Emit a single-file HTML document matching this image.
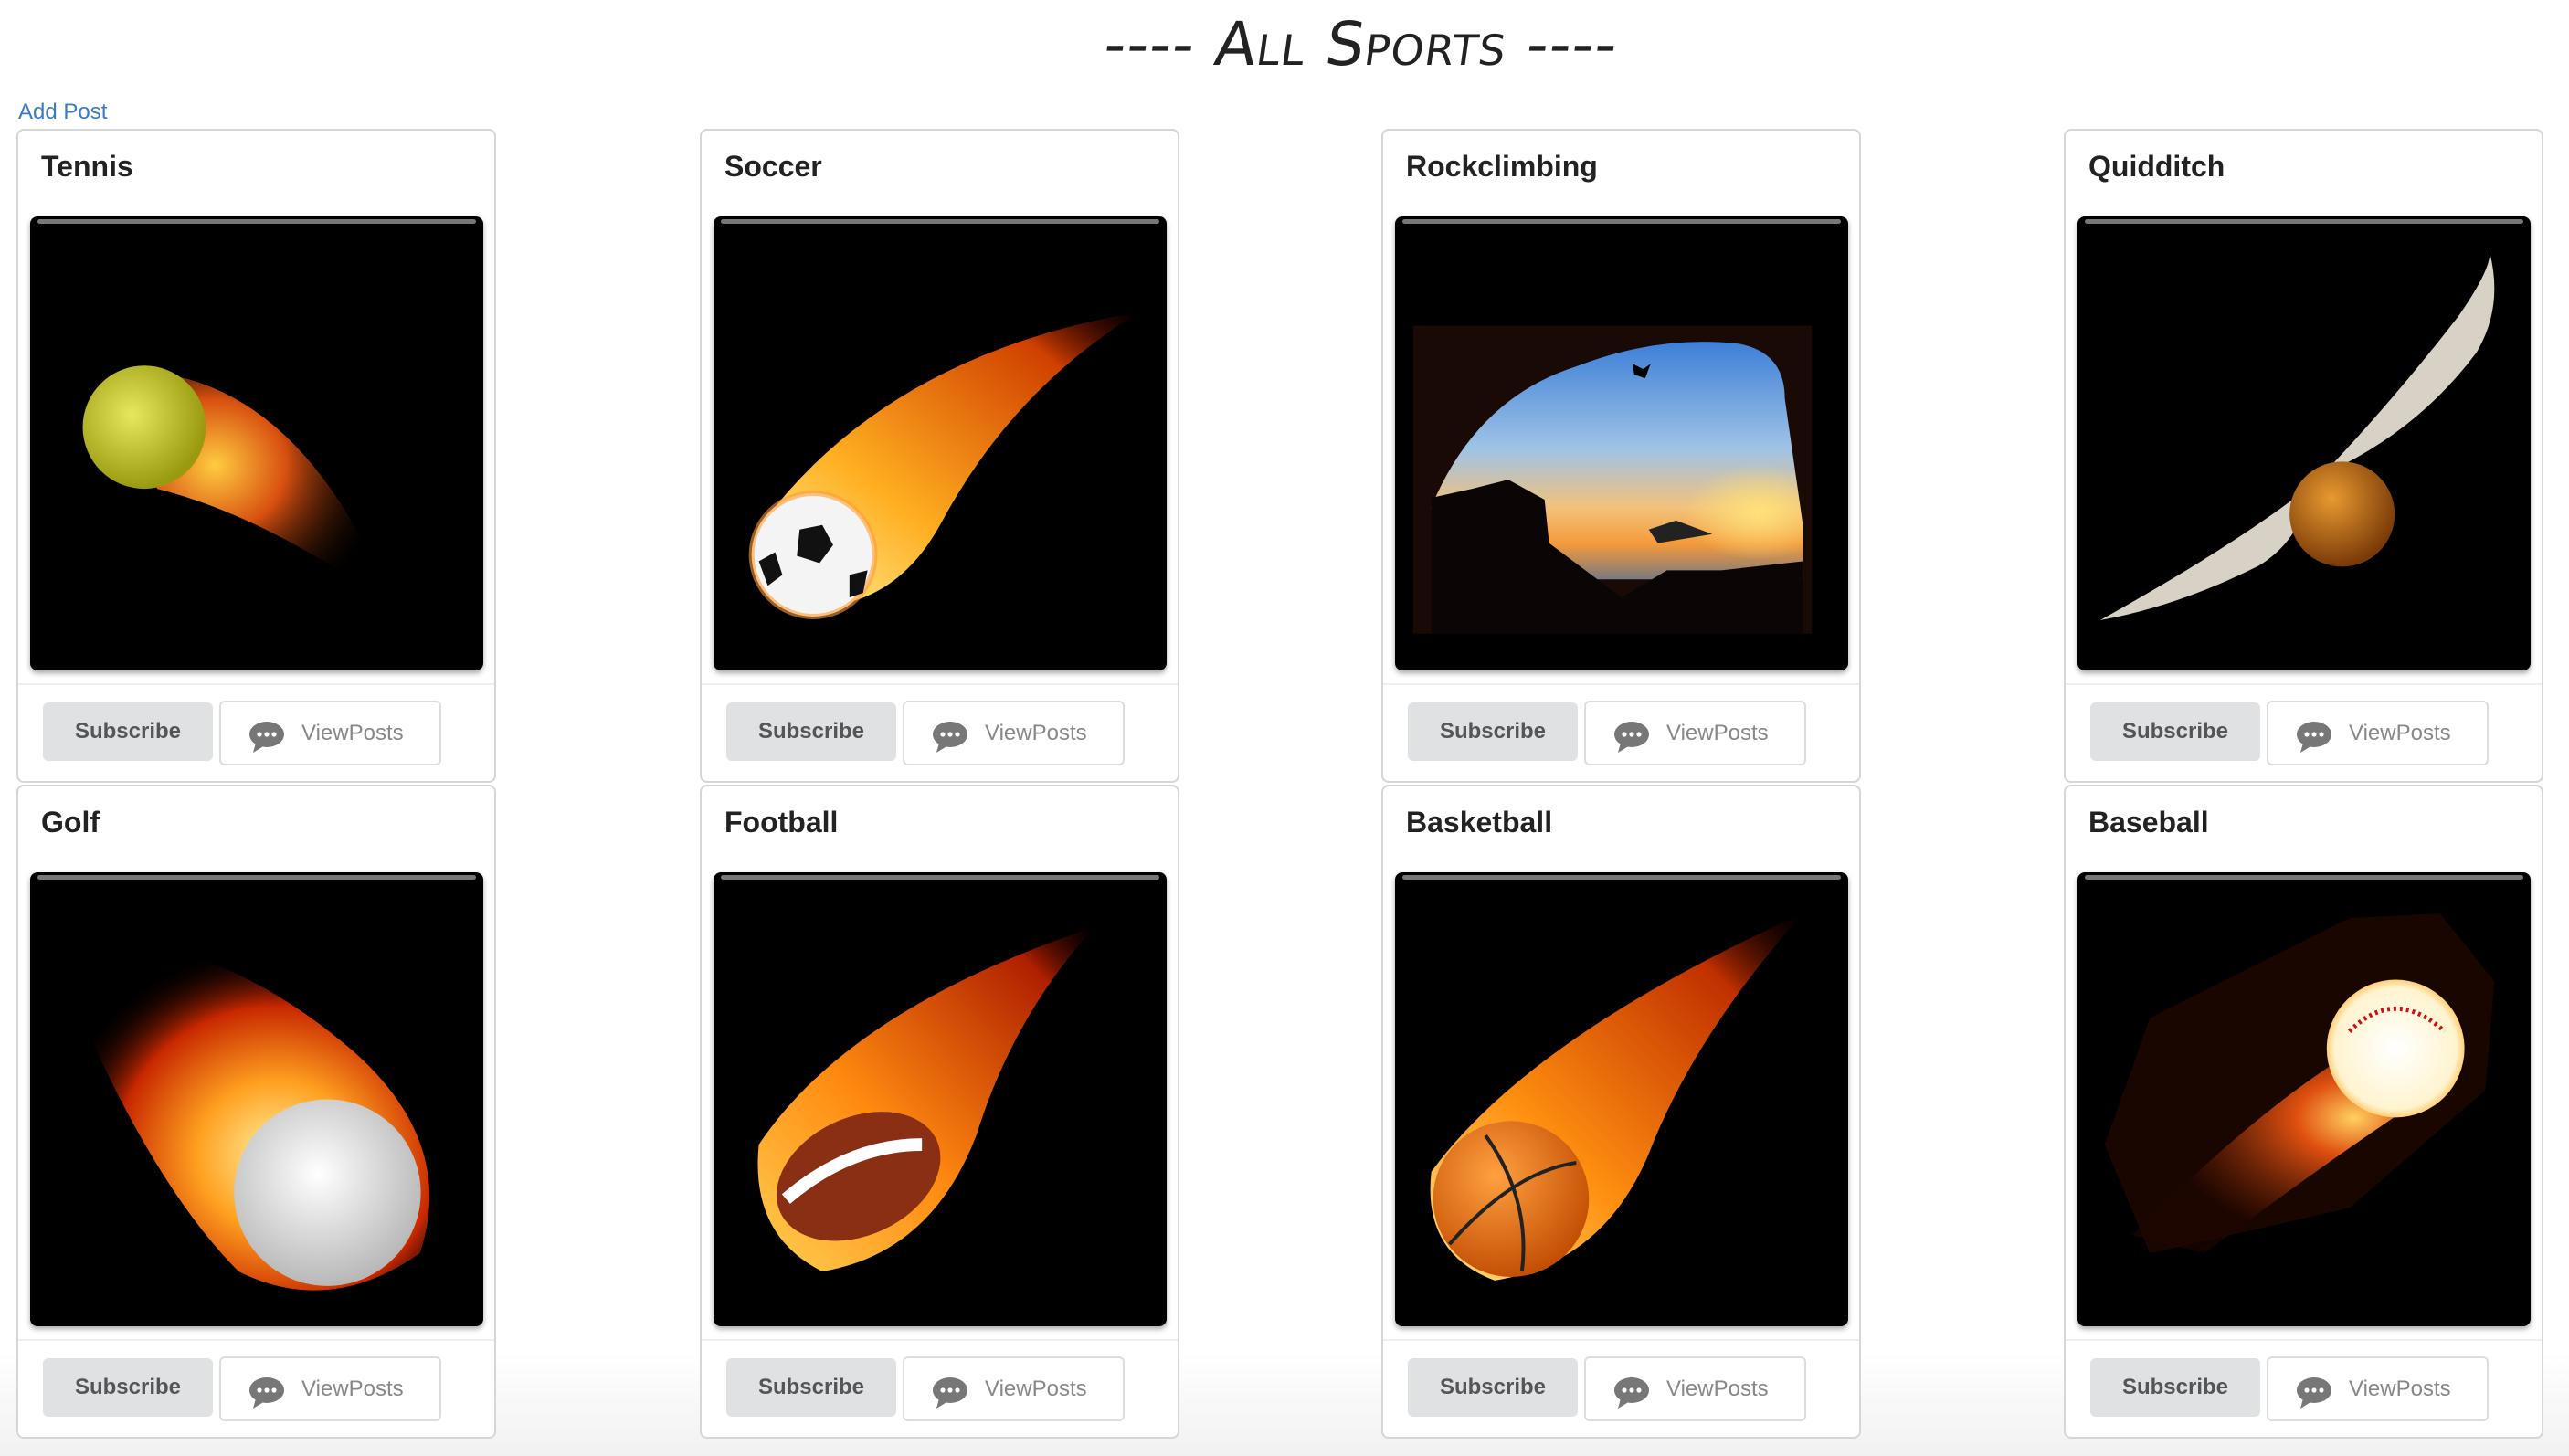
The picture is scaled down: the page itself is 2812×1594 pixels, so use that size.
<!DOCTYPE html>
<html><head><meta charset="utf-8"><style>
*{margin:0;padding:0;box-sizing:border-box}
body{width:2812px;height:1594px;background:linear-gradient(#fff 0,#fff 1480px,#f1f1f1 1594px);font-family:"Liberation Sans",sans-serif;position:relative;overflow:hidden}
.title{position:absolute;left:1140px;top:10px;width:700px;text-align:center;font-family:"DejaVu Sans",sans-serif;font-size:66px;color:#222;font-variant:small-caps;letter-spacing:1px;font-weight:normal;transform:skewX(-8deg)}
.add{position:absolute;left:20px;top:109px;font-size:24px;color:#3a7bc8}
.card{position:absolute;width:525px;height:716px;border:2px solid #d6d6d6;border-radius:8px;background:#fff}
.card h2{position:absolute;left:25px;top:21px;font-size:32px;font-weight:bold;color:#222}
.img{position:absolute;left:13px;top:94px;width:496px;height:497px;background:#000;border-radius:8px;overflow:hidden;box-shadow:0 3px 6px rgba(0,0,0,.35)}
.img:before{content:"";position:absolute;left:8px;right:8px;top:3px;height:5px;background:#777;border-radius:3px;z-index:2}
.img svg{position:absolute;left:0;top:0}
.div{position:absolute;left:0;right:0;top:605px;border-top:2px solid #eee}
.sub{position:absolute;left:27px;top:626px;width:186px;height:64px;background:#e0e1e2;border-radius:6px;font-size:24px;font-weight:bold;color:#555;text-align:center;line-height:64px}
.vp{position:absolute;left:220px;top:624px;width:243px;height:71px;border:2px solid #ddd;border-radius:6px;font-size:24px;color:#888;line-height:67px;padding-left:88px}
.vp svg{position:absolute;left:30px;top:20px}
</style></head><body>
<div class="title">---- All Sports ----</div>
<div class="add">Add Post</div>

<div class="card" style="left:18px;top:141px"><h2>Tennis</h2><div class="img"><svg width="496" height="497" viewBox="0 0 500 500">
<defs><radialGradient id="f1" cx="0.3" cy="0.4" r="0.7"><stop offset="0" stop-color="#ffcc40"/><stop offset="0.4" stop-color="#d85010"/><stop offset="1" stop-color="#000" stop-opacity="0"/></radialGradient>
<radialGradient id="tb" cx="0.4" cy="0.4" r="0.6"><stop offset="0" stop-color="#e8e860"/><stop offset="1" stop-color="#9a9a10"/></radialGradient></defs>
<path d="M120 170 Q300 180 400 430 Q260 330 140 300Z" fill="url(#f1)"/>
<circle cx="126" cy="232" r="68" fill="url(#tb)"/></svg></div>
<div class="div"></div><div class="sub">Subscribe</div><div class="vp"><svg width="40" height="36" viewBox="0 0 40 36"><ellipse cx="20" cy="15" rx="19" ry="14" fill="#777"/><path d="M8 24 L5 35 L18 27Z" fill="#777"/><circle cx="12" cy="15" r="2.6" fill="#fff"/><circle cx="20" cy="15" r="2.6" fill="#fff"/><circle cx="28" cy="15" r="2.6" fill="#fff"/></svg>ViewPosts</div></div>

<div class="card" style="left:766px;top:141px"><h2>Soccer</h2><div class="img"><svg width="496" height="497" viewBox="0 0 500 500">
<defs><linearGradient id="f2" x1="0" y1="1" x2="1" y2="0"><stop offset="0" stop-color="#fff3a0"/><stop offset="0.35" stop-color="#ffae20"/><stop offset="0.8" stop-color="#d04000"/><stop offset="1" stop-color="#600" stop-opacity="0"/></linearGradient></defs>
<path d="M60 330 Q200 150 470 105 Q330 190 250 340 Q200 430 110 430Z" fill="url(#f2)"/>
<circle cx="110" cy="373" r="68" fill="#f4f4f4"/><circle cx="110" cy="373" r="68" fill="none" stroke="#ff9b30" stroke-width="6" opacity=".6"/>
<path d="M95 345 l25 -5 l12 22 l-15 20 l-25 -8Z" fill="#111"/><path d="M50 380 l18 -10 l8 25 l-16 12Z" fill="#111"/><path d="M150 395 l20 -5 l-5 25 l-15 5Z" fill="#111"/></svg></div>
<div class="div"></div><div class="sub">Subscribe</div><div class="vp"><svg width="40" height="36" viewBox="0 0 40 36"><ellipse cx="20" cy="15" rx="19" ry="14" fill="#777"/><path d="M8 24 L5 35 L18 27Z" fill="#777"/><circle cx="12" cy="15" r="2.6" fill="#fff"/><circle cx="20" cy="15" r="2.6" fill="#fff"/><circle cx="28" cy="15" r="2.6" fill="#fff"/></svg>ViewPosts</div></div>

<div class="card" style="left:1512px;top:141px"><h2>Rockclimbing</h2><div class="img"><svg width="496" height="497" viewBox="0 0 500 500">
<defs><linearGradient id="sky" x1="0" y1="0" x2="0" y2="1"><stop offset="0" stop-color="#3d7fd8"/><stop offset="0.45" stop-color="#9fc3e6"/><stop offset="0.7" stop-color="#f2c27a"/><stop offset="0.85" stop-color="#f49a3a"/><stop offset="1" stop-color="#7a7a80"/></linearGradient>
<radialGradient id="sun" cx="0.88" cy="0.72" r="0.2"><stop offset="0" stop-color="#ffe27a"/><stop offset="1" stop-color="#ffe27a" stop-opacity="0"/></radialGradient></defs>
<rect x="20" y="120" width="440" height="340" fill="#1a0a06"/>
<path d="M40 320 Q90 200 200 165 Q290 130 380 140 Q430 150 430 200 L450 340 L450 400 L50 400Z" fill="url(#sky)"/>
<path d="M40 320 Q90 200 200 165 Q290 130 380 140 Q430 150 430 200 L450 340 L450 400 L50 400Z" fill="url(#sun)"/>
<path d="M40 400 L40 310 L85 300 L125 290 L165 312 L170 360 L250 420 L300 390 L360 390 L450 380 L450 460 L40 460Z" fill="#0b0605"/>
<path d="M280 345 L310 335 L350 350 L290 360Z" fill="#222"/>
<path d="M262 162 l12 6 l8 -6 l-6 16 l-12 -4Z" fill="#000"/></svg></div>
<div class="div"></div><div class="sub">Subscribe</div><div class="vp"><svg width="40" height="36" viewBox="0 0 40 36"><ellipse cx="20" cy="15" rx="19" ry="14" fill="#777"/><path d="M8 24 L5 35 L18 27Z" fill="#777"/><circle cx="12" cy="15" r="2.6" fill="#fff"/><circle cx="20" cy="15" r="2.6" fill="#fff"/><circle cx="28" cy="15" r="2.6" fill="#fff"/></svg>ViewPosts</div></div>

<div class="card" style="left:2259px;top:141px"><h2>Quidditch</h2><div class="img"><svg width="496" height="497" viewBox="0 0 500 500">
<defs><radialGradient id="gs" cx="0.4" cy="0.35" r="0.65"><stop offset="0" stop-color="#e89a30"/><stop offset="1" stop-color="#7a3a08"/></radialGradient></defs>
<path d="M282 272 Q350 200 420 110 Q455 60 455 40 Q470 100 440 150 Q380 230 290 275Z" fill="#d8d2c6"/>
<path d="M240 310 Q160 370 25 445 Q110 430 200 385 Q240 360 250 320Z" fill="#d8d2c6"/>
<circle cx="292" cy="328" r="58" fill="url(#gs)"/></svg></div>
<div class="div"></div><div class="sub">Subscribe</div><div class="vp"><svg width="40" height="36" viewBox="0 0 40 36"><ellipse cx="20" cy="15" rx="19" ry="14" fill="#777"/><path d="M8 24 L5 35 L18 27Z" fill="#777"/><circle cx="12" cy="15" r="2.6" fill="#fff"/><circle cx="20" cy="15" r="2.6" fill="#fff"/><circle cx="28" cy="15" r="2.6" fill="#fff"/></svg>ViewPosts</div></div>

<div class="card" style="left:18px;top:859px"><h2>Golf</h2><div class="img"><svg width="496" height="497" viewBox="0 0 500 500">
<defs><radialGradient id="g5" cx="0.6" cy="0.62" r="0.6"><stop offset="0" stop-color="#fff2a0"/><stop offset="0.35" stop-color="#ffa020"/><stop offset="0.7" stop-color="#c82800"/><stop offset="1" stop-color="#000" stop-opacity="0"/></radialGradient>
<radialGradient id="gb" cx="0.45" cy="0.4" r="0.6"><stop offset="0" stop-color="#fff"/><stop offset="1" stop-color="#b8b8b8"/></radialGradient></defs>
<path d="M20 70 Q200 60 360 200 Q470 300 430 420 Q330 490 230 440 Q120 330 20 70Z" fill="url(#g5)"/>
<circle cx="328" cy="353" r="103" fill="url(#gb)"/></svg></div>
<div class="div"></div><div class="sub">Subscribe</div><div class="vp"><svg width="40" height="36" viewBox="0 0 40 36"><ellipse cx="20" cy="15" rx="19" ry="14" fill="#777"/><path d="M8 24 L5 35 L18 27Z" fill="#777"/><circle cx="12" cy="15" r="2.6" fill="#fff"/><circle cx="20" cy="15" r="2.6" fill="#fff"/><circle cx="28" cy="15" r="2.6" fill="#fff"/></svg>ViewPosts</div></div>

<div class="card" style="left:766px;top:859px"><h2>Football</h2><div class="img"><svg width="496" height="497" viewBox="0 0 500 500">
<defs><linearGradient id="f6" x1="0" y1="1" x2="1" y2="0"><stop offset="0" stop-color="#ffd050"/><stop offset="0.4" stop-color="#ff8a10"/><stop offset="0.85" stop-color="#b02000"/><stop offset="1" stop-color="#400" stop-opacity="0"/></linearGradient></defs>
<path d="M50 300 Q150 150 420 60 Q330 160 290 290 Q240 420 120 440 Q40 400 50 300Z" fill="url(#f6)"/>
<ellipse cx="160" cy="335" rx="95" ry="65" transform="rotate(-25 160 335)" fill="#8a2e14"/>
<path d="M80 360 Q150 300 230 300" stroke="#fff" stroke-width="14" fill="none"/></svg></div>
<div class="div"></div><div class="sub">Subscribe</div><div class="vp"><svg width="40" height="36" viewBox="0 0 40 36"><ellipse cx="20" cy="15" rx="19" ry="14" fill="#777"/><path d="M8 24 L5 35 L18 27Z" fill="#777"/><circle cx="12" cy="15" r="2.6" fill="#fff"/><circle cx="20" cy="15" r="2.6" fill="#fff"/><circle cx="28" cy="15" r="2.6" fill="#fff"/></svg>ViewPosts</div></div>

<div class="card" style="left:1512px;top:859px"><h2>Basketball</h2><div class="img"><svg width="496" height="497" viewBox="0 0 500 500">
<defs><linearGradient id="f7" x1="0" y1="1" x2="1" y2="0"><stop offset="0" stop-color="#ffe080"/><stop offset="0.35" stop-color="#ff9010"/><stop offset="0.8" stop-color="#c03000"/><stop offset="1" stop-color="#300" stop-opacity="0"/></linearGradient>
<radialGradient id="bb" cx="0.4" cy="0.35" r="0.7"><stop offset="0" stop-color="#ffa040"/><stop offset="1" stop-color="#c04a00"/></radialGradient></defs>
<path d="M40 330 Q150 180 450 45 Q330 180 280 310 Q230 430 110 450 Q30 420 40 330Z" fill="url(#f7)"/>
<circle cx="128" cy="360" r="86" fill="url(#bb)"/>
<path d="M60 410 Q130 330 200 320" stroke="#222" stroke-width="4" fill="none"/><path d="M100 290 Q150 360 140 440" stroke="#222" stroke-width="4" fill="none"/></svg></div>
<div class="div"></div><div class="sub">Subscribe</div><div class="vp"><svg width="40" height="36" viewBox="0 0 40 36"><ellipse cx="20" cy="15" rx="19" ry="14" fill="#777"/><path d="M8 24 L5 35 L18 27Z" fill="#777"/><circle cx="12" cy="15" r="2.6" fill="#fff"/><circle cx="20" cy="15" r="2.6" fill="#fff"/><circle cx="28" cy="15" r="2.6" fill="#fff"/></svg>ViewPosts</div></div>

<div class="card" style="left:2259px;top:859px"><h2>Baseball</h2><div class="img"><svg width="496" height="497" viewBox="0 0 500 500">
<defs><radialGradient id="f8" cx="0.7" cy="0.35" r="0.6"><stop offset="0" stop-color="#ffd060"/><stop offset="0.3" stop-color="#e05010"/><stop offset="1" stop-color="#200600" stop-opacity="0.6"/></radialGradient>
<radialGradient id="bsb" cx="0.5" cy="0.5" r="0.55"><stop offset="0" stop-color="#fff"/><stop offset="0.8" stop-color="#fff4d0"/><stop offset="1" stop-color="#ffb030"/></radialGradient></defs>
<path d="M30 300 L80 160 L300 50 L400 45 L460 120 L450 240 L300 370 L80 420Z" fill="#1a0600"/>
<path d="M60 400 Q200 260 300 200 Q370 170 410 230 Q300 300 140 420Z" fill="url(#f8)"/>
<circle cx="351" cy="194" r="76" fill="url(#bsb)"/>
<path d="M300 175 Q350 125 405 175" stroke="#d01010" stroke-width="5" stroke-dasharray="3 4" fill="none"/></svg></div>
<div class="div"></div><div class="sub">Subscribe</div><div class="vp"><svg width="40" height="36" viewBox="0 0 40 36"><ellipse cx="20" cy="15" rx="19" ry="14" fill="#777"/><path d="M8 24 L5 35 L18 27Z" fill="#777"/><circle cx="12" cy="15" r="2.6" fill="#fff"/><circle cx="20" cy="15" r="2.6" fill="#fff"/><circle cx="28" cy="15" r="2.6" fill="#fff"/></svg>ViewPosts</div></div>
</body></html>
